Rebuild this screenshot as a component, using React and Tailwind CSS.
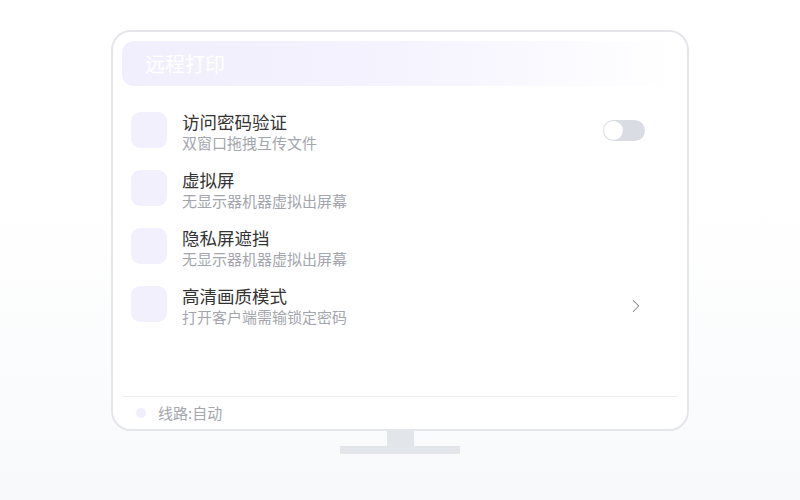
import { ChevronRight } from 'lucide-react'

const rows = [
  { title: '访问密码验证', sub: '双窗口拖拽互传文件', right: 'toggle' },
  { title: '虚拟屏', sub: '无显示器机器虚拟出屏幕' },
  { title: '隐私屏遮挡', sub: '无显示器机器虚拟出屏幕' },
  { title: '高清画质模式', sub: '打开客户端需输锁定密码', right: 'chevron' },
]

function Toggle(){
  return (
    <div className="w-[42px] h-[21px] rounded-full bg-[#d9dce2] flex items-center px-[1px]">
      <div className="w-[19px] h-[19px] rounded-full bg-white" />
    </div>
  )
}

export default function App(){
  return (
    <div className="w-[800px] h-[500px] bg-gradient-to-b from-white from-40% to-[#f8f9fb] flex flex-col items-center pt-[30px]" style={{ fontFamily: '"Noto Sans CJK SC", "Noto Sans", sans-serif' }}>
      <div className="w-[578px] h-[401px] border-2 border-[#e4e6eb] rounded-[20px] bg-white p-[9px] pb-0 flex flex-col">
        <div className="h-[45px] rounded-[12px] bg-gradient-to-r from-[#f1eefd] via-[#f5f3fe] to-white/0 flex items-center pl-[23px]">
          <span className="text-white text-[20px]">远程打印</span>
        </div>

        <div className="mt-[26px] flex flex-col gap-[22px] pl-[9px] pr-[33px]">
          {rows.map(r => (
            <div key={r.title} className="flex items-center h-[36px]">
              <div className="w-[36px] h-[36px] rounded-[9px] bg-[#f3f0fe] shrink-0" />
              <div className="ml-[15px] flex flex-col mt-[4px]">
                <span className="text-[17.5px] leading-[22px] text-[#333333]">{r.title}</span>
                <span className="text-[15px] leading-[20px] text-[#a3a6ad]">{r.sub}</span>
              </div>
              <div className="ml-auto">
                {r.right === 'toggle' && <Toggle />}
                {r.right === 'chevron' && <ChevronRight className="w-[22px] h-[22px] text-[#80858e] -mr-[2px] mt-[4px]" strokeWidth={1.1} />}
              </div>
            </div>
          ))}
        </div>

        <div className="flex-1" />
        <div className="border-t border-[#eceef1] h-[33px] flex items-center pl-[14px]">
          <div className="w-[10px] h-[10px] rounded-full bg-[#f0edfc]" />
          <span className="ml-[12px] text-[15px] text-[#a3a6ad]">线路:自动</span>
        </div>
      </div>
      <div className="w-[27px] h-[15px] bg-[#e2e5e9]" />
      <div className="w-[120px] h-[8px] bg-[#e2e5e9]" />
    </div>
  )
}
